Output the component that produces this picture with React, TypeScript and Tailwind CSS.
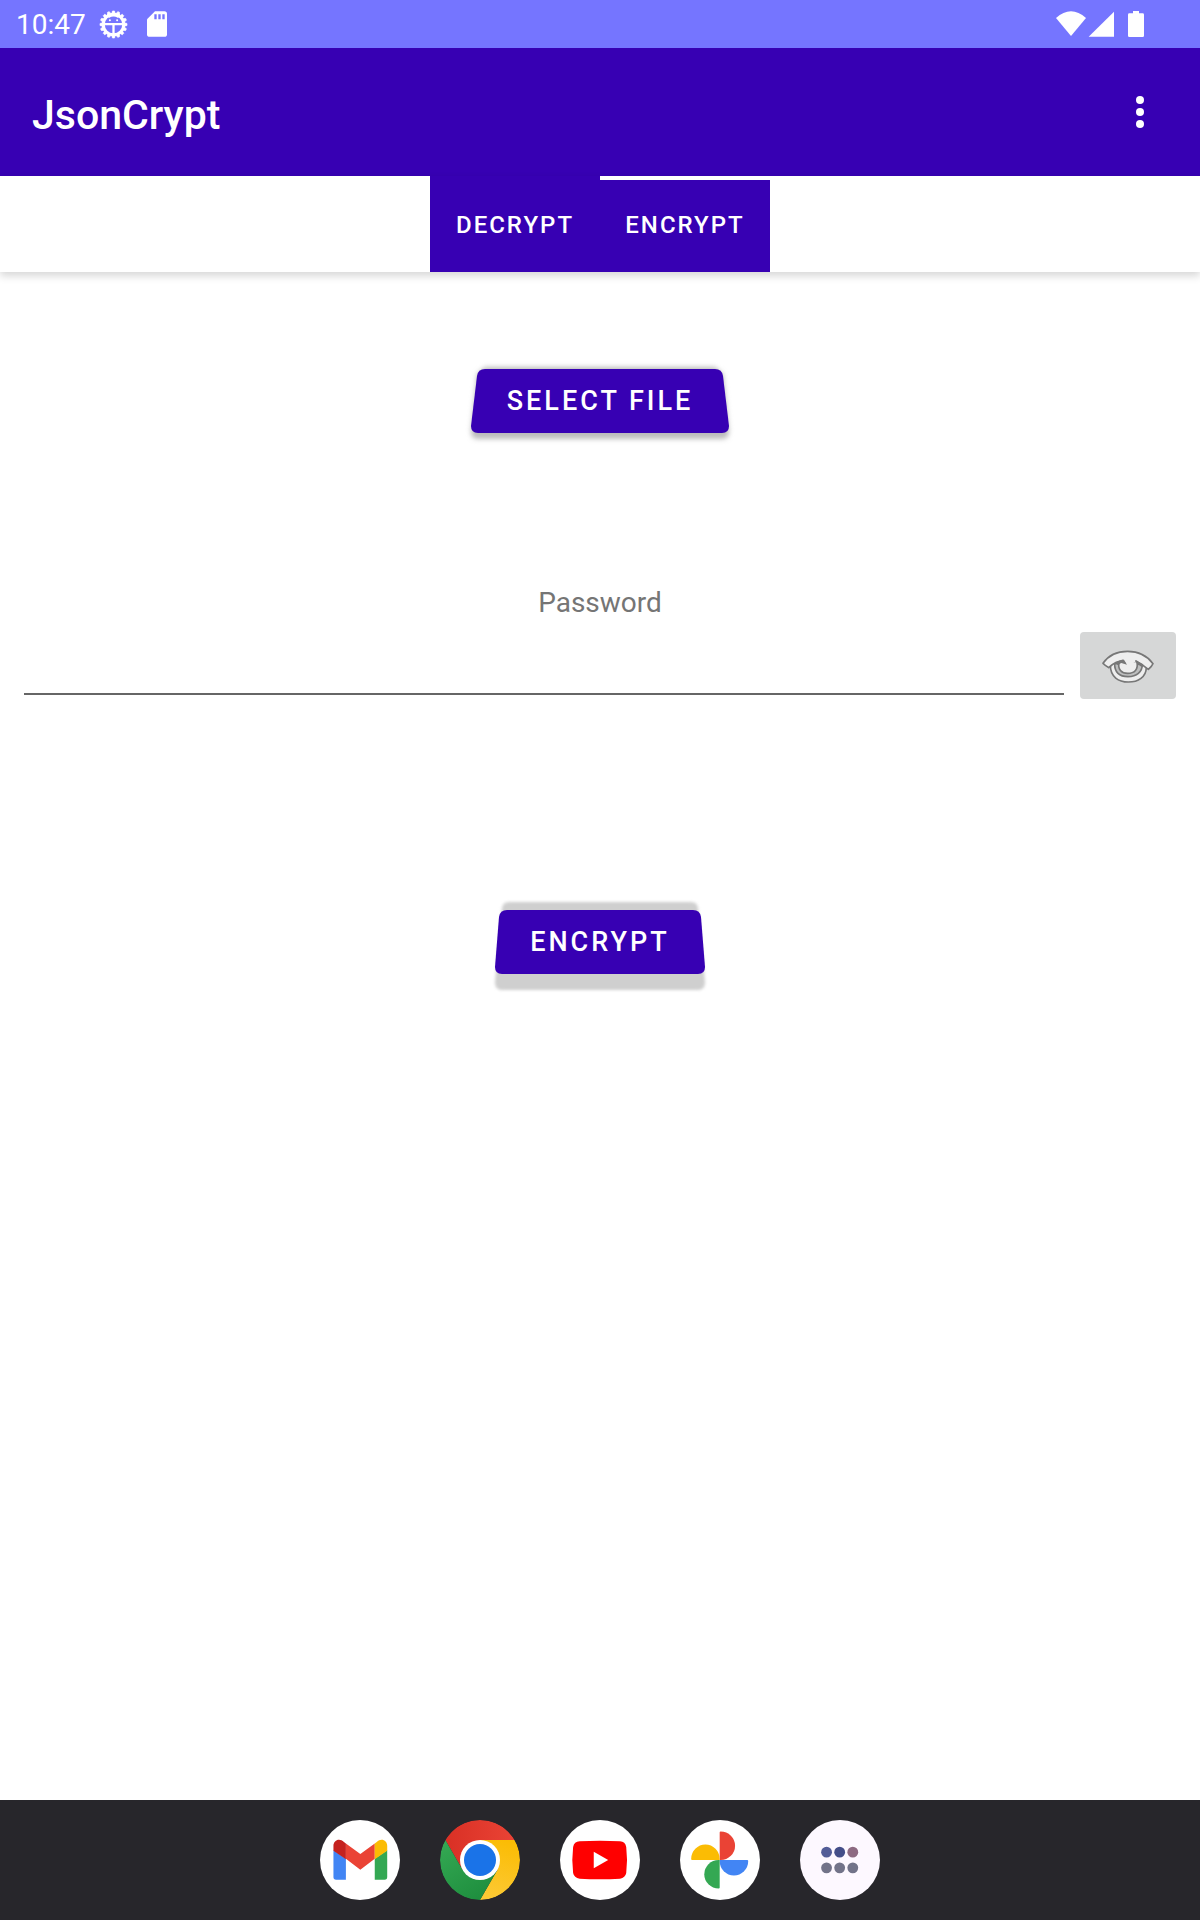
import { useId } from "react";

function DebugIcon() {
  const teeth = Array.from({ length: 16 }, (_, i) => i * 22.5);
  return (
    <svg viewBox="296 28 86 88" className="h-[29px] w-[29px]" aria-hidden="true">
      <circle cx="339" cy="72" r="31" fill="none" stroke="white" strokeWidth="9" />
      {teeth.map((angle) => (
        <path
          key={angle}
          d="M334 38 L336 31 H342 L344 38 Z"
          fill="white"
          stroke="white"
          strokeWidth="2"
          strokeLinejoin="round"
          transform={`rotate(${angle} 339 72)`}
        />
      ))}
      <path d="M310 71 H368 M339 71 V102" stroke="white" strokeWidth="7" />
      <path d="M319 40 H359 L353 52 Q339 43 325 52 Z" fill="white" />
      <circle cx="328" cy="59" r="3" fill="white" />
      <circle cx="350" cy="59" r="3" fill="white" />
    </svg>
  );
}

function CardIcon() {
  return (
    <svg viewBox="441 33 60 77" className="h-[26px] w-5" aria-hidden="true">
      <path d="M465 33 H493 Q501 33 501 41 V102 Q501 110 493 110 H449 Q441 110 441 102 V57 Z" fill="white" />
      <path d="M463 42 H470 V57 H463 Z M475 42 H482 V57 H475 Z M487 42 H494 V57 H487 Z" fill="#7575ff" />
    </svg>
  );
}

function StatusBar() {
  return (
    <div className="flex h-12 items-center justify-between bg-[#7575ff] pl-4 pr-14 text-white">
      <div className="flex items-center">
        <time className="w-[83px] pt-[2px] text-[28px] leading-8">10:47</time>
        <DebugIcon />
        <span className="w-[19px]" />
        <CardIcon />
      </div>
      <svg viewBox="108 33 264 78" className="h-[26px] w-[88px]" role="img" aria-label="Wi-Fi, signal and battery">
        <path d="M108 54 Q153 14 198 54 L153 108 Z" fill="white" />
        <path d="M206 110 L282 35 V110 Z" fill="white" />
        <path d="M339 33 H357 V40 H368 Q372 40 372 44 V107 Q372 111 368 111 H328 Q324 111 324 107 V44 Q324 40 328 40 H339 Z" fill="white" />
      </svg>
    </div>
  );
}

function AppBar() {
  return (
    <header className="flex h-32 items-center justify-between bg-[#3700b3] pl-8 pr-9 text-white">
      <h1 className="pt-[6px] text-[41px] font-medium leading-12">JsonCrypt</h1>
      <button type="button" aria-label="More options" className="flex h-12 w-12 items-center justify-center">
        <svg viewBox="0 0 8 32" className="h-8 w-2" fill="white" aria-hidden="true">
          <circle cx="4" cy="4" r="4" />
          <circle cx="4" cy="16" r="4" />
          <circle cx="4" cy="28" r="4" />
        </svg>
      </button>
    </header>
  );
}

function Tabs() {
  return (
    <div role="tablist" className="flex h-24 justify-center bg-white text-2xl font-medium tracking-[2px] text-white shadow-[0_4px_8px_rgba(0,0,0,0.16)]">
      <button type="button" role="tab" aria-selected="false" className="w-[170px] border-t-4 border-[#3700b3] bg-[#3700b3] pb-[2px]">
        DECRYPT
      </button>
      <button type="button" role="tab" aria-selected="true" className="w-[170px] border-t-4 border-white bg-[#3700b3] pb-[2px]">
        ENCRYPT
      </button>
    </div>
  );
}

type TiltedButtonProps = {
  label: string;
  width: number;
  raised?: boolean;
};

function TiltedButton({ label, width, raised = false }: TiltedButtonProps) {
  const blur = useId();
  const right = width;
  const inset = raised ? 4 : 6;
  const face = `M${inset + 8} 0 H${right - inset - 8} Q${right - inset - 1} 0 ${right - inset} 7 L${right} 57 Q${right} 64 ${right - 7} 64 H7 Q0 64 0 57 L${inset} 7 Q${inset + 1} 0 ${inset + 8} 0 Z`;
  return (
    <button type="button" className="grid h-16 place-items-center text-[27px] font-medium tracking-[3px] text-white" style={{ width }}>
      <svg viewBox={`0 0 ${width} 64`} className="col-start-1 row-start-1 h-16 w-full overflow-visible" aria-hidden="true">
        <filter id={blur} x="-20%" y="-40%" width="140%" height="180%">
          <feGaussianBlur stdDeviation={raised ? 1.8 : 2.5} />
        </filter>
        {raised ? (
          <path
            d={`M14 -8 H${right - 14} Q${right - 8} -8 ${right - 7} -2 L${right} 72 Q${right} 80 ${right - 7} 80 H7 Q0 80 0 72 L7 -2 Q8 -8 14 -8 Z`}
            fill="#cfcfcf"
            filter={`url(#${blur})`}
          />
        ) : (
          <path
            d={`M14 -2 H${right - 14} L${right - 6} 5 L${right} 62 Q${right} 70 ${right - 7} 70 H7 Q0 70 0 62 L6 5 Z`}
            fill="#bcbcbc"
            filter={`url(#${blur})`}
          />
        )}
        <path d={face} fill="#3700b3" />
      </svg>
      <span className="z-10 col-start-1 row-start-1">{label}</span>
    </button>
  );
}

function EyeIcon() {
  return (
    <svg viewBox="186 120 156 102" className="h-[34px] w-[52px]" aria-hidden="true">
      <g stroke="#777777" strokeWidth="5" strokeLinejoin="round" strokeLinecap="round">
        <path d="M211 169 C211 204 236 219 265 219 C295 219 318 204 319 176 L304 160 H222 Z" fill="#eeeeee" />
        <path d="M224 163 C223 190 238 203 264 203 C290 203 307 189 307 166 Z" fill="#bdbebe" />
        <path d="M237 162 C233 180 244 193 263 193 C284 193 295 181 291 160" fill="#eeeeee" />
        <path
          d="M189 163 C222 115 303 115 339 164 L334 172 L325 181 L309 169 L288 156 C280 164 268 168 258 162 L249 154 L229 160 C219 165 213 169 206 176 L196 169 Z"
          fill="#eeeeee"
          stroke="none"
        />
        <path d="M249 154 L229 160 C219 165 213 169 206 176 L196 169 L189 163 C222 115 303 115 339 164 L334 172 L325 181 L309 169 L288 156" fill="none" />
      </g>
      <path d="M228 160 Q238 153 252 152 L261 167 L244 162 L232 168 Z" fill="#777777" />
      <path d="M286 154 L309 166 L305 174 L292 164 Z" fill="#777777" />
    </svg>
  );
}

function GmailIcon() {
  return (
    <svg viewBox="60 88 242 244" className="h-20 w-20" aria-hidden="true">
      <path d="M100 180 L138 206 V270 H108 Q100 270 100 262 Z" fill="#4285f4" />
      <path d="M226 206 L264 180 V262 Q264 270 256 270 H226 Z" fill="#34a853" />
      <path d="M138 160 L182 192 L226 160 V206 L182 240 L138 206 Z" fill="#ea4335" />
      <path d="M100 182 V167 C100 150 118 141 132 155 L138 160 V208 Z" fill="#c5221f" />
      <path d="M264 182 V167 C264 150 246 141 232 155 L226 160 V208 Z" fill="#fbbc04" />
    </svg>
  );
}

function ChromeIcon() {
  return (
    <svg viewBox="0 0 80 80" className="h-20 w-20" aria-hidden="true">
      <defs>
        <linearGradient id="chrome-red">
          <stop stopColor="#d93025" />
          <stop offset="1" stopColor="#ea4335" />
        </linearGradient>
        <linearGradient id="chrome-green" x1="0.7" y1="1" x2="0.1" y2="0">
          <stop stopColor="#1e8e3e" />
          <stop offset="1" stopColor="#34a853" />
        </linearGradient>
        <linearGradient id="chrome-yellow" x1="0.4" y1="1" x2="0.6" y2="0">
          <stop stopColor="#fcc934" />
          <stop offset="1" stopColor="#fbbc04" />
        </linearGradient>
      </defs>
      <path d="M5.360 20 A40 40 0 0 1 74.640 20 H40 L22.680 50 Z" fill="url(#chrome-red)" />
      <path d="M74.640 20 A40 40 0 0 1 40 80 L57.320 50 L40 20 Z" fill="url(#chrome-yellow)" />
      <path d="M40 80 A40 40 0 0 1 5.360 20 L22.680 50 L57.320 50 Z" fill="url(#chrome-green)" />
      <circle cx="40" cy="40" r="20" fill="white" />
      <circle cx="40" cy="40" r="16" fill="#1a73e8" />
    </svg>
  );
}

function YouTubeIcon() {
  return (
    <svg viewBox="60 88 242 244" className="h-20 w-20" aria-hidden="true">
      <path d="M119 153 Q181 149 242 153 Q258 154 261 170 Q266 210 261 250 Q258 265 242 267 Q181 271 119 267 Q102 265 99 250 Q94 210 99 170 Q102 154 119 153 Z" fill="#ff0000" />
      <path d="M162 185 L206 210 L162 235 Z" fill="white" />
    </svg>
  );
}

function PhotosIcon() {
  return (
    <svg viewBox="420 88 242 244" className="h-20 w-20" aria-hidden="true">
      <path d="M540 210 V126 Q540 123 543 123 A44 43.500 0 0 1 543 210 Z" fill="#ea4335" />
      <path d="M540 210 H624 Q627 210 627 213 A43.500 44 0 0 1 540 213 Z" fill="#4285f4" />
      <path d="M540 210 V294 Q540 297 537 297 A44 43.500 0 0 1 537 210 Z" fill="#34a853" />
      <path d="M540 210 H456 Q453 210 453 207 A43.500 44 0 0 1 540 207 Z" fill="#fbbc04" />
    </svg>
  );
}

function AppsIcon() {
  return (
    <svg viewBox="180 88 242 244" className="h-20 w-20" aria-hidden="true">
      <circle cx="260" cy="186" r="16.500" fill="#535d98" />
      <circle cx="300" cy="186" r="16.500" fill="#444e89" />
      <circle cx="340" cy="186" r="16.500" fill="#8d6a82" />
      <circle cx="260" cy="234" r="16.500" fill="#727389" />
      <circle cx="300" cy="234" r="16.500" fill="#727389" />
      <circle cx="340" cy="234" r="16.500" fill="#727389" />
    </svg>
  );
}

const dockItems = [
  { name: "Gmail", Icon: GmailIcon, background: "bg-white" },
  { name: "Chrome", Icon: ChromeIcon, background: "bg-transparent" },
  { name: "YouTube", Icon: YouTubeIcon, background: "bg-white" },
  { name: "Photos", Icon: PhotosIcon, background: "bg-white" },
  { name: "All apps", Icon: AppsIcon, background: "bg-[#fdf8ff]" },
];

function Dock() {
  return (
    <nav className="flex h-30 items-center justify-center gap-10 bg-[#27262b]">
      {dockItems.map(({ name, Icon, background }) => (
        <button key={name} type="button" aria-label={name} className={`size-20 overflow-hidden rounded-full ${background}`}>
          <Icon />
        </button>
      ))}
    </nav>
  );
}

export default function App() {
  return (
    <div className="flex min-h-screen flex-col bg-white font-[Roboto,sans-serif]">
      <StatusBar />
      <AppBar />
      <Tabs />
      <main className="flex flex-1 flex-col items-center px-6 pt-[97px]">
        <TiltedButton label="SELECT FILE" width={258} />
        <div className="mt-38 flex w-full flex-col">
          <label htmlFor="password" className="text-center text-[28px] leading-9 text-[#757575]">
            Password
          </label>
          <div className="mt-[11px] flex items-start gap-4">
            <input
              id="password"
              type="password"
              className="h-[63px] min-w-0 flex-1 border-b-2 border-[#666666] bg-transparent text-4xl outline-none"
            />
            <button type="button" aria-label="Show password" className="flex h-[67px] w-24 items-center justify-center rounded bg-[#d6d7d7]">
              <EyeIcon />
            </button>
          </div>
        </div>
        <div className="mt-[211px]">
          <TiltedButton label="ENCRYPT" width={210} raised />
        </div>
      </main>
      <Dock />
    </div>
  );
}
